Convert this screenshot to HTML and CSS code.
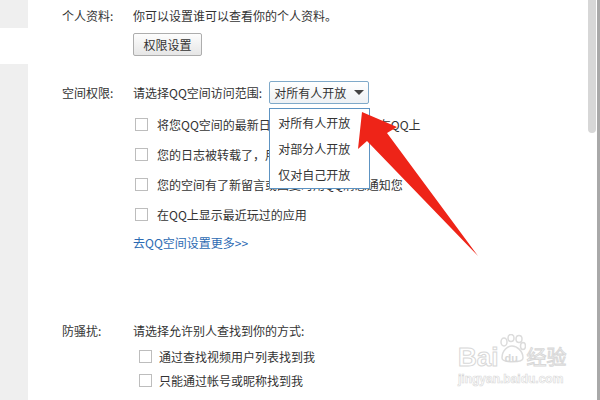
FILE: index.html
```html
<!DOCTYPE html>
<html lang="zh-CN">
<head>
    <meta charset="UTF-8">
    <title>权限设置</title>
    <link rel="stylesheet" href="styles.css">
</head>
<body>
    <div class="page">
        <div class="sidebar">
            <div class="side-block side-top"></div>
            <div class="side-gap"></div>
            <div class="side-block side-rest"></div>
        </div>

        <main class="content">
            <!-- 个人资料 -->
            <section class="section section-profile">
                <div class="label">个人资料:</div>
                <div class="body">
                    <div class="line">你可以设置谁可以查看你的个人资料。</div>
                    <button class="btn">权限设置</button>
                </div>
            </section>

            <!-- 空间权限 -->
            <section class="section section-space">
                <div class="label label-select">空间权限:</div>
                <div class="body">
                    <div class="select-line">
                        <span>请选择QQ空间访问范围:</span>
                        <span class="select-wrap">
                            <span class="select">对所有人开放<i class="caret"></i></span>
                            <ul class="dropdown">
                                <li>对所有人开放</li>
                                <li>对部分人开放</li>
                                <li>仅对自己开放</li>
                            </ul>
                        </span>
                    </div>
                    <label class="check-row"><span class="box"></span>将您QQ空间的最新日志、说说等动态展示在QQ上</label>
                    <label class="check-row"><span class="box"></span>您的日志被转载了，用QQ消息通知您</label>
                    <label class="check-row"><span class="box"></span>您的空间有了新留言或回复时用QQ消息通知您</label>
                    <label class="check-row"><span class="box"></span>在QQ上显示最近玩过的应用</label>
                    <a class="more" href="#">去QQ空间设置更多&gt;&gt;</a>
                </div>
            </section>

            <!-- 防骚扰 -->
            <section class="section section-spam">
                <div class="label">防骚扰:</div>
                <div class="body">
                    <div class="line">请选择允许别人查找到你的方式:</div>
                    <label class="check-row small"><span class="box"></span>通过查找视频用户列表找到我</label>
                    <label class="check-row small"><span class="box"></span>只能通过帐号或昵称找到我</label>
                </div>
            </section>
        </main>

        <div class="scrollbar">
            <div class="thumb"></div>
        </div>
    </div>

    <!-- 红色箭头标注 -->
    <svg class="arrow" width="600" height="400" viewBox="0 0 600 400">
        <polygon points="362,112 397,127 387,133 478,256 367,141 358,149" fill="#ee2418"/>
    </svg>

    <div class="watermark">
        <div class="wm-logo">
            <span class="wm-bai">Bai</span>
            <span class="wm-paw">
                <svg width="28" height="30" viewBox="0 0 28 30">
                    <ellipse cx="6" cy="8" rx="3" ry="4" fill="none" stroke="#dcdcdc" stroke-width="1.5"/>
                    <ellipse cx="13" cy="4" rx="3" ry="3.5" fill="none" stroke="#dcdcdc" stroke-width="1.5"/>
                    <ellipse cx="21" cy="5" rx="3" ry="3.5" fill="none" stroke="#dcdcdc" stroke-width="1.5"/>
                    <ellipse cx="25" cy="12" rx="2.5" ry="3.5" fill="none" stroke="#dcdcdc" stroke-width="1.5"/>
                    <path d="M4 24 C4 16 10 12 14 12 C19 12 25 17 25 24 C25 29 4 29 4 24 Z" fill="none" stroke="#dcdcdc" stroke-width="1.5"/>
                </svg>
                <span class="wm-du">du</span>
            </span>
            <span class="wm-jy">经验</span>
        </div>
        <div class="wm-url">jingyan.baidu.com</div>
    </div>
</body>
</html>
```

FILE: styles.css
```css
body {
    margin: 0;
    padding: 0;
    font-family: "Noto Sans CJK SC", "Noto Sans", sans-serif;
    font-size: 12px;
    color: #333;
    background-color: white;
    overflow: hidden;
}

.page {
    display: flex;
    width: 600px;
    height: 400px;
}

/* Barre grise a gauche */
.sidebar {
    width: 28px;
    display: flex;
    flex-direction: column;
}

.side-block {
    background-color: #efefef;
}

.side-top {
    height: 28px;
}

.side-gap {
    height: 36px;
}

.side-rest {
    flex: 1;
}

/* Contenu */
.content {
    flex: 1;
    padding: 6px 0 0 34px;
}

.section {
    display: flex;
}

.label {
    width: 71px;
    line-height: 20px;
    flex-shrink: 0;
}

.body {
    display: flex;
    flex-direction: column;
    align-items: flex-start;
}

.line {
    line-height: 20px;
}

.btn {
    margin-top: 7px;
    width: 69px;
    height: 23px;
    padding: 0;
    font-family: inherit;
    font-size: 12px;
    color: #333;
    border: 1px solid #adadad;
    border-radius: 2px;
    background: linear-gradient(#fdfdfd, #e6e6e6);
}

.section-space {
    margin-top: 25px;
}

.label-select {
    line-height: 23px;
}

.select-line {
    display: flex;
    align-items: center;
    height: 23px;
}

.select-wrap {
    position: relative;
    margin-left: 7px;
}

.select {
    display: flex;
    align-items: center;
    box-sizing: border-box;
    width: 100px;
    height: 23px;
    padding-left: 4px;
    border: 1px solid #7fa9c9;
    border-radius: 2px;
    background: linear-gradient(#ffffff, #eef1f4);
}

.caret {
    margin-left: 8px;
    width: 0;
    height: 0;
    border-left: 5px solid transparent;
    border-right: 5px solid transparent;
    border-top: 5px solid #444;
}

/* Menu deroulant */
.dropdown {
    position: absolute;
    top: 27px;
    left: 0;
    width: 101px;
    box-sizing: border-box;
    margin: 0;
    padding: 1px 0 0 0;
    list-style: none;
    background-color: white;
    border: 1px solid #5d93c2;
    z-index: 10;
}

.dropdown li {
    height: 26px;
    line-height: 26px;
    padding-left: 8px;
}

.check-row {
    display: flex;
    align-items: center;
    height: 30px;
    white-space: nowrap;
}

.section-space .check-row:first-of-type {
    margin-top: 5px;
}

.box {
    width: 13px;
    height: 13px;
    box-sizing: border-box;
    margin: 0 9px 0 2px;
    border: 1px solid #bdbdbd;
    background-color: white;
}

.more {
    line-height: 28px;
    color: #2d6bb3;
    text-decoration: none;
}

.section-spam {
    margin-top: 64px;
}

.check-row.small {
    height: 24px;
}

.check-row.small:first-of-type {
    margin-top: 3px;
}

.check-row.small .box {
    margin: 0 7px 0 6px;
}

/* Barre de defilement */
.scrollbar {
    width: 12px;
    display: flex;
    justify-content: flex-end;
    border-right: 3px solid #a9a9a9;
    box-sizing: border-box;
}

.thumb {
    width: 8px;
    height: 133px;
    margin-right: 1px;
    background-color: #d7d7d7;
    border-radius: 0 0 4px 4px;
}

/* Fleche rouge */
.arrow {
    position: absolute;
    top: 0;
    left: 0;
    pointer-events: none;
    z-index: 20;
}

/* Filigrane */
.watermark {
    position: absolute;
    left: 458px;
    top: 332px;
    color: #e4e4e4;
}

.wm-logo {
    display: flex;
    align-items: flex-end;
    height: 38px;
}

.wm-bai {
    font-family: "Liberation Sans", sans-serif;
    font-size: 26px;
    font-weight: bold;
    line-height: 26px;
    color: white;
    -webkit-text-stroke: 1px #d8d8d8;
}

.wm-paw {
    position: relative;
    width: 28px;
    height: 36px;
}

.wm-paw svg {
    position: absolute;
    top: 0;
    left: 0;
}

.wm-du {
    position: absolute;
    left: 6px;
    bottom: 6px;
    font-family: "Liberation Sans", sans-serif;
    font-size: 11px;
    font-weight: bold;
    color: #d8d8d8;
}

.wm-jy {
    font-size: 20px;
    line-height: 26px;
    color: white;
    -webkit-text-stroke: 1px #d8d8d8;
}

.wm-url {
    font-family: "Liberation Sans", sans-serif;
    font-size: 12px;
    font-weight: bold;
    color: white;
    -webkit-text-stroke: 0.6px #d8d8d8;
    margin-top: 2px;
}
```
